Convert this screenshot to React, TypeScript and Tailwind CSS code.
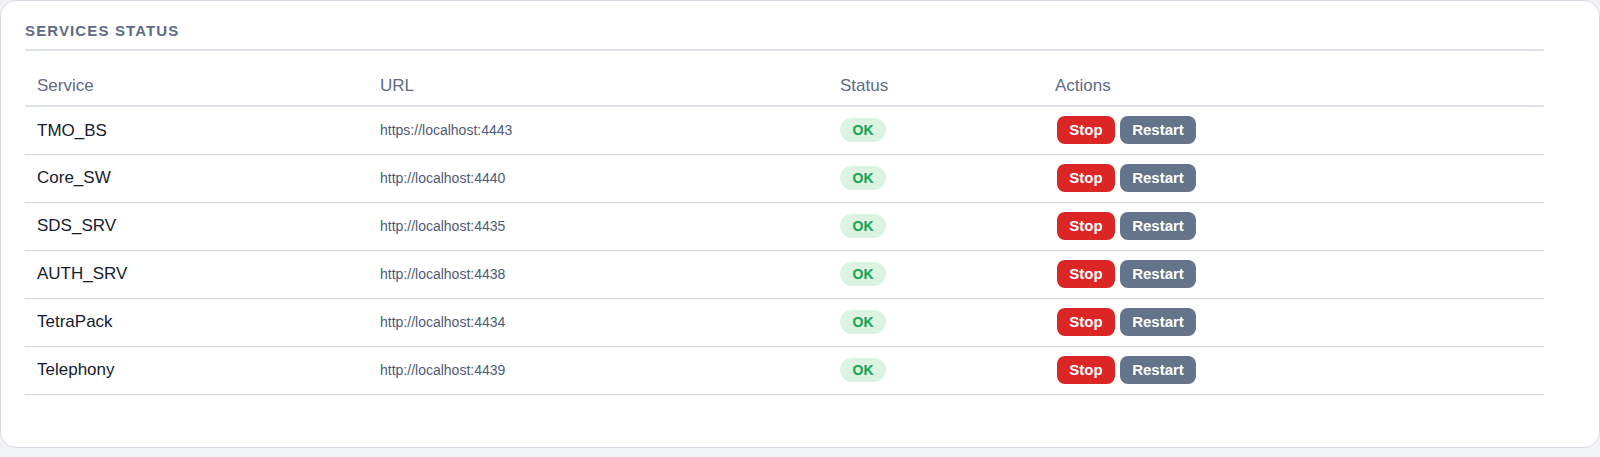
import React from 'react';

interface Service {
  name: string;
  url: string;
  status: string;
}

const services: Service[] = [
  { name: 'TMO_BS', url: 'https://localhost:4443', status: 'OK' },
  { name: 'Core_SW', url: 'http://localhost:4440', status: 'OK' },
  { name: 'SDS_SRV', url: 'http://localhost:4435', status: 'OK' },
  { name: 'AUTH_SRV', url: 'http://localhost:4438', status: 'OK' },
  { name: 'TetraPack', url: 'http://localhost:4434', status: 'OK' },
  { name: 'Telephony', url: 'http://localhost:4439', status: 'OK' },
];

const App: React.FC = () => {
  return (
    <div className="min-h-screen bg-[#f1f3f7] font-['Liberation_Sans',Arial,sans-serif]">
      <div className="w-full h-[448px] bg-white border border-[#d6dae3] rounded-2xl pt-5 pl-6 pr-[55px]">
        <div className="pb-2 border-b-2 border-[#dde1e8]">
          <h2 className="text-[15px] leading-5 font-bold uppercase tracking-[0.075em] text-[#5f6b85]">Services Status</h2>
        </div>
        <table className="w-full mt-[15px] border-collapse text-left">
          <thead>
            <tr className="border-b-2 border-[#dde1e8]">
              <th className="w-[343px] h-[40px] px-3 font-normal text-[17px] text-[#5f6b85]">Service</th>
              <th className="w-[460px] px-3 font-normal text-[17px] text-[#5f6b85]">URL</th>
              <th className="w-[215px] px-3 font-normal text-[17px] text-[#5f6b85]">Status</th>
              <th className="px-3 font-normal text-[17px] text-[#5f6b85]">Actions</th>
            </tr>
          </thead>
          <tbody>
            {services.map((s) => (
              <tr key={s.name} className="border-b border-[#d3d7df]">
                <td className="h-12 px-3 text-[17px] text-[#161b2e]">{s.name}</td>
                <td className="px-3 text-sm text-[#4f5b74]">{s.url}</td>
                <td className="px-3">
                  <span className="inline-flex items-center justify-center w-[46px] h-6 rounded-full bg-[#dcf2e3] text-sm font-bold text-[#16a34a]">
                    {s.status}
                  </span>
                </td>
                <td className="px-3">
                  <div className="flex items-center gap-[5px] pl-0.5">
                    <button className="w-[58px] h-7 rounded-lg bg-[#dc2626] text-[15px] font-bold text-white">Stop</button>
                    <button className="w-[76px] h-7 rounded-lg bg-[#64748b] text-[15px] font-bold text-white">Restart</button>
                  </div>
                </td>
              </tr>
            ))}
          </tbody>
        </table>
      </div>
    </div>
  );
};

export default App;
